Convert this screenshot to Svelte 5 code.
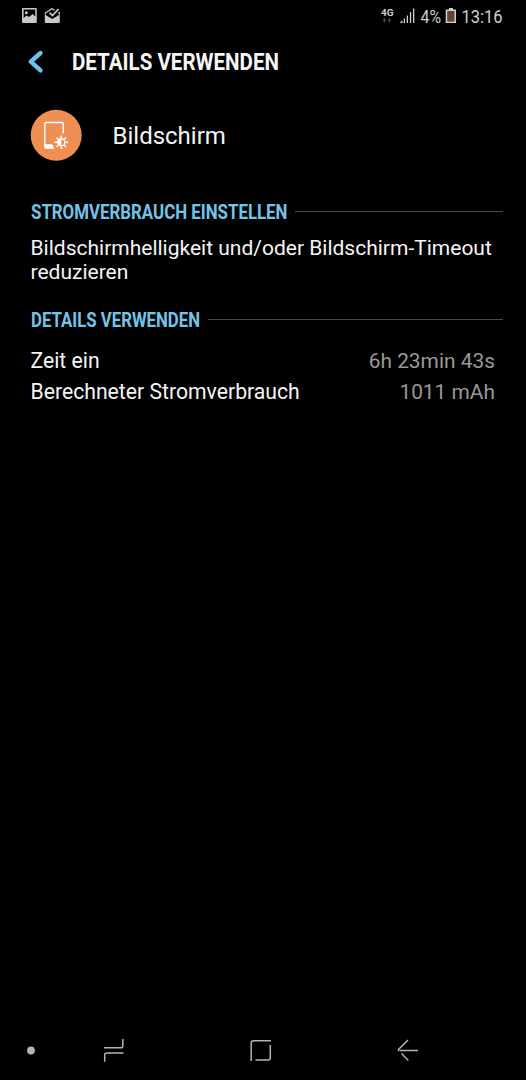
<script lang="ts">
    type Row = {
        label: string;
        value: string;
    }

    const rows: Row[] = [
        { label: "Zeit ein", value: "6h 23min 43s" },
        { label: "Berechneter Stromverbrauch", value: "1011 mAh" },
    ];

    const rays = [0, 45, 90, 135, 180, 225, 270, 315];
</script>

<!-- Roboto squeezed to the width of its condensed cut -->
{#snippet condensed(text: string, width: number, size: number, weight: number)}
    <svg class="condensed" {width} height="28" font-size={size} font-weight={weight}>
        <text x="0" y="21" textLength={width} lengthAdjust="spacingAndGlyphs">{text}</text>
    </svg>
{/snippet}

{#snippet section(title: string, width: number)}
    <h2 class="section">
        {@render condensed(title, width, 19.5, 700)}
        <span class="rule"></span>
    </h2>
{/snippet}

<div class="screen">
    <div class="status">
        <svg width="60" height="32" viewBox="10 0 60 32">
            <path fill="#c8c8c8" fill-rule="evenodd" d="M23 8h12.800q1 0 1 1v13q0 1-1 1H23q-1 0-1-1V9q0-1 1-1zm.6 1.600v8.400l3-2.500 2.500 1.500 3.500-3 2.700 2.500V9.600z" />
            <circle cx="26.300" cy="12.700" r="1.500" fill="#c8c8c8" />
            <path fill="#c8c8c8" d="M44.800 14.500l7.500 4.500 7.500-4.500v7.500q0 1-1 1h-13q-1 0-1-1z" />
            <path fill="none" stroke="#c8c8c8" stroke-width="1.300" d="M45.300 14.500v-1.500l6.700-4.200 2.500 1.300M58.500 11.800l.8 1v1.700" />
            <path fill="none" stroke="#c8c8c8" stroke-width="1.800" d="M49.500 12.800l3 2.700 6-6.500" />
        </svg>
        <svg width="146" height="32" viewBox="380 0 146 32">
            <g fill="#d0d0d0">
                <text x="381" y="15.500" font-size="9" font-weight="700" textLength="12.500" lengthAdjust="spacingAndGlyphs">4G</text>
                <path fill="#4c4c4c" d="M383.700 18h1.500v2.300h1.200l-2 2.200-2-2.200h1.300zM388.700 22.500h1.500v-2.300h1.200l-2-2.200-2 2.200h1.300z" />
                <path d="M399.500 23l3-2.500V23zM403.700 18.500h1.300V23h-1.300zM406.700 15.500h1.300V23h-1.300zM409.900 12h1.300v11h-1.300zM413 8.500h1.300V23H413z" />
                <text x="420.500" y="23" font-size="18.500" textLength="20.500" lengthAdjust="spacingAndGlyphs">4%</text>
                <path d="M449 8h4v1.500h3V23h-10.300V9.500h3.300z" />
                <path fill="#6b4038" d="M447.200 11h7.300v10.700h-7.300z" />
                <text x="461.500" y="23" font-size="18.500" textLength="41" lengthAdjust="spacingAndGlyphs">13:16</text>
            </g>
        </svg>
    </div>

    <header>
        <svg class="back" width="20" height="26" viewBox="26 49 20 26">
            <path d="M40.500 53L30.800 61.700 40.500 70.300" />
        </svg>
        <h1>{@render condensed("DETAILS VERWENDEN", 207, 23.5, 700)}</h1>
    </header>

    <div class="app">
        <svg width="52" height="52" viewBox="30 109 52 52">
            <circle cx="56.200" cy="135.300" r="25.500" fill="#ef8f54" />
            <g fill="none" stroke="#fff" stroke-width="1.400">
                <path d="M63.300 133.500V124q0-1.500-1.500-1.500H46.300q-1.500 0-1.500 1.500v22.500q0 1.500 1.500 1.500H53" />
                <circle cx="61.300" cy="142.300" r="3.600" />
                {#each rays as angle}
                    <path stroke-width="1.500" d="M61.300 138v-2.400" transform="rotate({angle} 61.300 142.300)" />
                {/each}
            </g>
            <path fill="#fff" d="M45 144.300h7l2.500 4.300H46q-1 0-1-1zM61.300 138.700a3.600 3.600 0 0 0 0 7.200z" />
        </svg>
        <span class="app-name">Bildschirm</span>
    </div>

    {@render section("STROMVERBRAUCH EINSTELLEN", 256.5)}
    <p class="hint">Bildschirmhelligkeit und/oder Bildschirm-Timeout reduzieren</p>

    {@render section("DETAILS VERWENDEN", 169)}
    <dl>
        {#each rows as row}
            <div class="row">
                <dt>{row.label}</dt>
                <dd>{row.value}</dd>
            </div>
        {/each}
    </dl>

    <nav>
        <svg width="526" height="60" viewBox="0 1020 526 60">
            <circle cx="31" cy="1050.500" r="3.900" fill="#b4b4b4" />
            <g fill="none" stroke="#b4b4b4" stroke-width="1.500">
                <path d="M104 1047.800h17q1.800 0 1.800-1.800v-7M123.500 1053h-17q-1.800 0-1.800 1.800v7" />
                <path d="M271 1040.800h-17.500q-2.300 0-2.300 2.300v18M255.500 1060h12.500q2.300 0 2.300-2.300V1045" />
                <path d="M418 1050.500h-18.500M408 1040l-9 9q-1.300 1.500 0 1.500M401.500 1053.500l6.800 7" />
            </g>
        </svg>
    </nav>
</div>

<style>
    :global(body) {
        margin: 0;
        background: #000;
    }

    .screen {
        display: flex;
        flex-direction: column;
        box-sizing: border-box;
        height: 1080px;
        overflow: hidden;
        color: #f5f5f5;
        background: #000;
        font-family: Roboto, sans-serif;
        font-size: 21.2px;
    }

    svg {
        display: block;
        flex: none;
    }

    .condensed {
        fill: currentColor;
        overflow: visible;
    }

    h1, h2, p, dl, dt, dd {
        margin: 0;
        font-weight: 400;
    }

    .status {
        display: flex;
        justify-content: space-between;
        height: 32px;
        padding-left: 10px;
    }

    header {
        display: flex;
        align-items: center;
        gap: 26px;
        height: 60px;
        padding-left: 26px;
    }

    .back path {
        fill: none;
        stroke: #6cc1ea;
        stroke-width: 4.4;
        stroke-linecap: round;
        stroke-linejoin: round;
    }

    h1 {
        margin-top: 2px;
    }

    .app {
        display: flex;
        align-items: center;
        gap: 30.5px;
        margin-top: 17px;
        padding-left: 30px;
    }

    .app-name {
        font-size: 24px;
        line-height: 28px;
        margin-top: 1px;
    }

    .section {
        display: flex;
        align-items: center;
        gap: 8px;
        height: 28px;
        margin-top: 37px;
        padding: 0 23px 0 30.5px;
        color: #74c4e8;
    }

    .rule {
        flex: 1;
        height: 1px;
        margin-bottom: 1px;
        background: #4a4a4a;
    }

    .hint {
        margin-top: 10px;
        padding: 0 30px 0 30.5px;
        font-size: 21px;
        line-height: 24px;
    }

    .hint + .section {
        margin-top: 22.4px;
    }

    dl {
        margin-top: 10.6px;
        padding: 0 31px 0 30.5px;
    }

    .row {
        display: flex;
        align-items: baseline;
        justify-content: space-between;
        height: 31px;
        line-height: 31px;
    }

    dd {
        color: #999;
        font-size: 20.9px;
    }

    nav {
        margin-top: auto;
    }
</style>
